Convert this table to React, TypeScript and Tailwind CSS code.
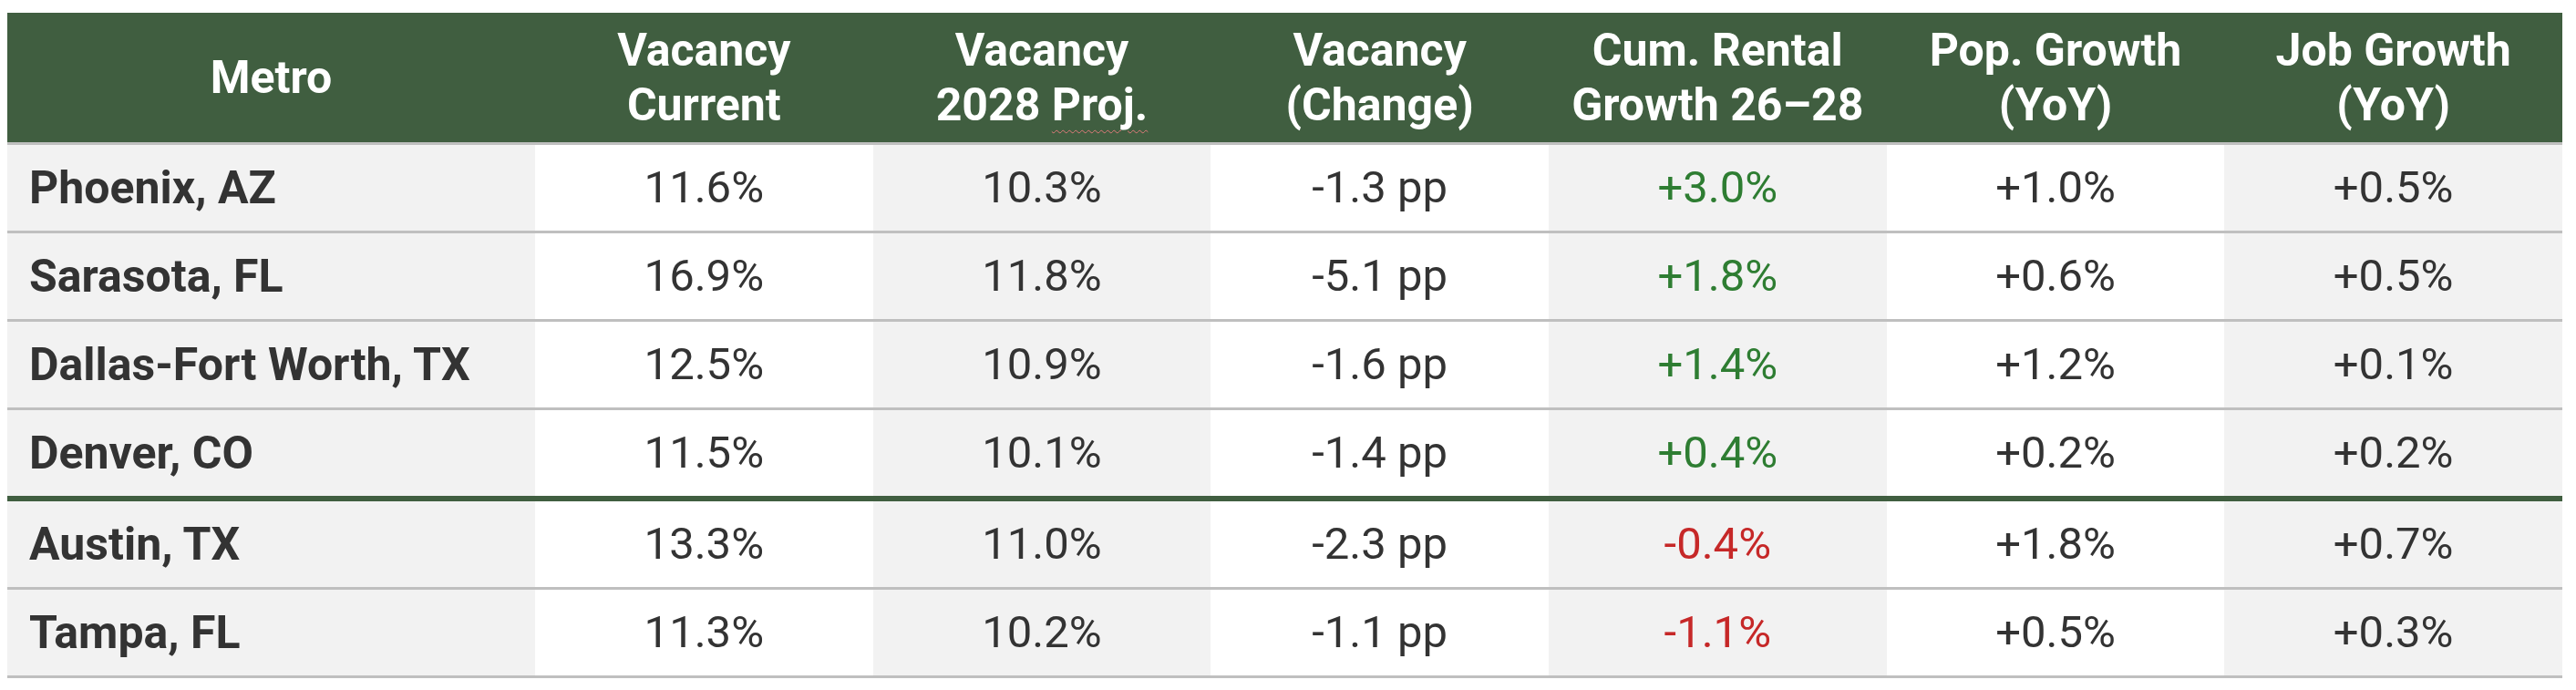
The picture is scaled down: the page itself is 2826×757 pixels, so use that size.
import React from 'react';

interface Row {
  metro: string;
  current: string;
  proj: string;
  change: string;
  rental: string;
  pop: string;
  job: string;
}

const rows: Row[] = [
  { metro: 'Phoenix, AZ', current: '11.6%', proj: '10.3%', change: '-1.3 pp', rental: '+3.0%', pop: '+1.0%', job: '+0.5%' },
  { metro: 'Sarasota, FL', current: '16.9%', proj: '11.8%', change: '-5.1 pp', rental: '+1.8%', pop: '+0.6%', job: '+0.5%' },
  { metro: 'Dallas-Fort Worth, TX', current: '12.5%', proj: '10.9%', change: '-1.6 pp', rental: '+1.4%', pop: '+1.2%', job: '+0.1%' },
  { metro: 'Denver, CO', current: '11.5%', proj: '10.1%', change: '-1.4 pp', rental: '+0.4%', pop: '+0.2%', job: '+0.2%' },
  { metro: 'Austin, TX', current: '13.3%', proj: '11.0%', change: '-2.3 pp', rental: '-0.4%', pop: '+1.8%', job: '+0.7%' },
  { metro: 'Tampa, FL', current: '11.3%', proj: '10.2%', change: '-1.1 pp', rental: '-1.1%', pop: '+0.5%', job: '+0.3%' },
];

const grid = 'grid grid-cols-[579px_repeat(6,minmax(0,1fr))]';

const App = () => {
  return (
    <div
      className="bg-white pt-[14px] pl-[8px] pr-[15px] min-h-[757px]"
      style={{ fontFamily: 'Roboto, "Liberation Sans", sans-serif' }}
    >
      {/* header */}
      <div className={`${grid} bg-[#405e40] text-white font-bold text-[50px] leading-[60px] h-[145px] border-b-[3px] border-[#bfbfbf]`}>
        <div className="flex items-center justify-center">Metro</div>
        <div className="flex items-center justify-center text-center">Vacancy<br />Current</div>
        <div className="flex items-center justify-center text-center">
          <span>
            Vacancy<br />2028{' '}
            <span className="underline decoration-wavy decoration-[#e07a7a] decoration-1 underline-offset-[10px]">Proj.</span>
          </span>
        </div>
        <div className="flex items-center justify-center text-center">Vacancy<br />(Change)</div>
        <div className="flex items-center justify-center text-center">Cum. Rental<br />Growth 26–28</div>
        <div className="flex items-center justify-center text-center">Pop. Growth<br />(YoY)</div>
        <div className="flex items-center justify-center text-center">Job Growth<br />(YoY)</div>
      </div>

      {rows.map((r, i) => {
        const negative = r.rental.startsWith('-');
        return (
          <div
            key={r.metro}
            className={`${grid} text-[#333333] text-[49px] ${
              i === 3 ? 'h-[100px] border-b-[6px] border-[#405e40]' : 'h-[97px] border-b-[3px] border-[#bfbfbf]'
            }`}
          >
            <div className="bg-[#f2f2f2] flex items-center pl-[24px] font-bold text-[50px]">{r.metro}</div>
            <div className="bg-white flex items-center justify-center">{r.current}</div>
            <div className="bg-[#f2f2f2] flex items-center justify-center">{r.proj}</div>
            <div className="bg-white flex items-center justify-center">{r.change}</div>
            <div
              className={`bg-[#f2f2f2] flex items-center justify-center ${
                negative ? 'text-[#c62828]' : 'text-[#2e7d32]'
              }`}
            >
              {r.rental}
            </div>
            <div className="bg-white flex items-center justify-center">{r.pop}</div>
            <div className="bg-[#f2f2f2] flex items-center justify-center">{r.job}</div>
          </div>
        );
      })}
    </div>
  );
};

export default App;
